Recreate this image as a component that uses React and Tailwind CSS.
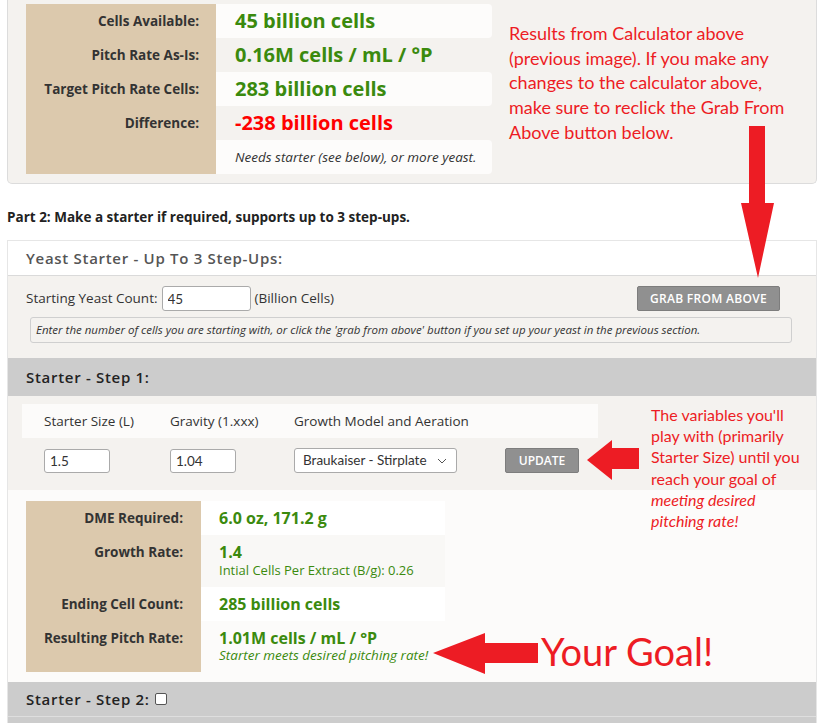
import React from 'react';

const green = 'text-[#3b8a0e]';

const TopRow = ({ label, value, white, valueClass }) => (
  <div className="flex h-[34px]">
    <div className="w-[190px] bg-[#dcc9ad] text-right pr-[17px] pt-[7px] text-[13.5px] font-bold text-[#333]">{label}</div>
    <div className={`w-[276px] pl-[19px] flex items-center rounded-r-[4px] ${white ? 'bg-[#fdfcfb]' : ''}`}>
      {value && <span className={`text-[20px] font-bold ${valueClass || green}`}>{value}</span>}
    </div>
  </div>
);

const ResultRow = ({ label, children, white, tall }) => (
  <div className={`flex ${tall ? 'h-[52px]' : 'h-[34px]'}`}>
    <div className="w-[175px] bg-[#dcc9ad] text-right pr-[18px] pt-[7px] text-[13.5px] font-bold text-[#333]">{label}</div>
    <div className={`w-[244px] pl-[18px] pt-[7px] ${white ? 'bg-white' : 'bg-[#f9f8f6]'}`}>{children}</div>
  </div>
);

const Arrow = ({ points }) => (
  <svg className="absolute left-0 top-0" width="823" height="723" viewBox="0 0 823 723">
    <polygon points={points} fill="#ed1c24" />
  </svg>
);

export default function App() {
  return (
    <div className="relative w-[823px] h-[723px] overflow-hidden bg-white font-['Open_Sans',sans-serif] text-[#333]">
      {/* Part 1 results */}
      <div className="ml-[7px] w-[810px] h-[184px] bg-[#f4f2ef] border border-t-0 border-[#dcdcdc] rounded-b-[5px] pt-[4px] pl-[18px] flex">
        <div>
          <TopRow label="Cells Available:" value="45 billion cells" white />
          <TopRow label="Pitch Rate As-Is:" value="0.16M cells / mL / °P" />
          <TopRow label="Target Pitch Rate Cells:" value="283 billion cells" white />
          <TopRow label="Difference:" value="-238 billion cells" valueClass="text-[#ff0000]" />
          <div className="flex h-[34px]">
            <div className="w-[190px] bg-[#dcc9ad]"></div>
            <div className="w-[276px] pl-[19px] flex items-center rounded-r-[4px] bg-[#fdfcfb] text-[13.5px] italic text-[#333]">
              Needs starter (see below), or more yeast.
            </div>
          </div>
        </div>
        <p className="ml-[17px] mt-[17px] whitespace-nowrap text-[#ed1c24] text-[18px] leading-[24.7px] font-['Lato',sans-serif]">
          Results from Calculator above<br />
          (previous image). If you make any<br />
          changes to the calculator above,<br />
          make sure to reclick the Grab From<br />
          Above button below.
        </p>
      </div>

      <h2 className="ml-[7px] mt-[24px] text-[13.5px] font-bold text-[#222] leading-[18px]">
        Part 2: Make a starter if required, supports up to 3 step-ups.
      </h2>

      {/* Part 2 panel */}
      <div className="ml-[7px] mt-[14px] w-[810px] border-l border-r border-t border-[#e6e6e6]">
        <div className="h-[35px] bg-white flex items-center pl-[18px] border-b border-[#dadada]">
          <span className="text-[15px] font-semibold tracking-[0.7px] text-[#555]">Yeast Starter - Up To 3 Step-Ups:</span>
        </div>

        <div className="bg-[#f4f2ef] h-[82px] pt-[10px] pl-[18px]">
          <div className="flex items-center h-[25px] pr-[36px]">
            <span className="text-[13.5px]">Starting Yeast Count:</span>
            <input
              readOnly
              value="45"
              className="ml-[4px] w-[89px] h-[25px] bg-white border border-[#aaa] rounded-[3px] px-[5px] text-[13.5px] font-['Lato',sans-serif] outline-none"
            />
            <span className="ml-[4px] text-[13.5px]">(Billion Cells)</span>
            <button className="ml-auto w-[143px] h-[25px] bg-[#909090] border border-[#7d7d7d] rounded-[2px] text-white text-[12px] font-semibold tracking-[0.3px]">
              GRAB FROM ABOVE
            </button>
          </div>
          <div className="mt-[6px] ml-[4px] w-[762px] h-[26px] border border-[#cfcfcf] rounded-[3px] flex items-center pl-[5px] text-[11.5px] italic text-[#333] whitespace-nowrap">
            Enter the number of cells you are starting with, or click the 'grab from above' button if you set up your yeast in the previous section.
          </div>
        </div>

        <div className="h-[38px] bg-[#cccccc] flex items-center pl-[18px]">
          <span className="text-[15px] font-semibold tracking-[0.7px] text-[#222]">Starter - Step 1:</span>
        </div>

        <div className="bg-[#f4f2ef] h-[94px] pt-[8px] pl-[14px]">
          <div className="w-[576px] h-[34px] bg-[#fcfbfa] flex items-center text-[13.5px] text-[#333]">
            <span className="ml-[22px] w-[126px]">Starter Size (L)</span>
            <span className="w-[124px]">Gravity (1.xxx)</span>
            <span>Growth Model and Aeration</span>
          </div>
          <div className="mt-[10px] flex items-center font-['Lato',sans-serif]">
            <input readOnly value="1.5" className="ml-[22px] w-[66px] h-[24px] bg-white border border-[#aaa] rounded-[3px] px-[5px] text-[13.5px] outline-none" />
            <input readOnly value="1.04" className="ml-[60px] w-[66px] h-[24px] bg-white border border-[#aaa] rounded-[3px] px-[5px] text-[13.5px] outline-none" />
            <div className="ml-[58px] w-[163px] h-[25px] bg-white border border-[#aaa] rounded-[3px] flex items-center pl-[8px] pr-[9px] text-[13.5px] whitespace-nowrap">
              <span>Braukaiser - Stirplate</span>
              <svg className="ml-auto" width="10" height="6" viewBox="0 0 10 6">
                <path d="M1 1l4 4 4-4" fill="none" stroke="#555" strokeWidth="1" />
              </svg>
            </div>
            <button className="ml-[48px] w-[74px] h-[25px] bg-[#909090] border border-[#7d7d7d] rounded-[2px] text-white text-[12px] font-semibold font-['Open_Sans',sans-serif]">
              UPDATE
            </button>
          </div>
        </div>

        <div className="bg-[#fcfbfa] h-[192px] pt-[11px] pl-[18px]">
          <ResultRow label="DME Required:" white>
            <div className={`text-[16px] font-bold leading-[20px] ${green}`}>6.0 oz, 171.2 g</div>
          </ResultRow>
          <ResultRow label="Growth Rate:" tall>
            <div className={`text-[16px] font-bold leading-[20px] ${green}`}>1.4</div>
            <div className={`text-[13px] leading-[17px] ${green}`}>Intial Cells Per Extract (B/g): 0.26</div>
          </ResultRow>
          <ResultRow label="Ending Cell Count:" white>
            <div className={`text-[16px] font-bold leading-[20px] ${green}`}>285 billion cells</div>
          </ResultRow>
          <div className="flex h-[51px]">
            <div className="w-[175px] bg-[#dcc9ad] text-right pr-[18px] pt-[7px] text-[13.5px] font-bold text-[#333]">Resulting Pitch Rate:</div>
            <div className="pl-[18px] pt-[7px]">
              <div className={`text-[16px] font-bold leading-[20px] ${green}`}>1.01M cells / mL / °P</div>
              <div className={`text-[13.5px] italic leading-[14px] ${green}`}>Starter meets desired pitching rate!</div>
            </div>
          </div>
        </div>

        <div className="h-[34px] bg-[#cccccc] flex items-center pl-[18px]">
          <span className="text-[15px] font-semibold tracking-[0.7px] text-[#222]">Starter - Step 2:</span>
          <span className="ml-[5px] w-[12px] h-[12px] bg-white border border-[#555] rounded-[2px]"></span>
        </div>
        <div className="h-[20px] bg-[#cccccc] border-t border-[#dedede]"></div>
      </div>

      {/* annotations */}
      <Arrow points="749,126 765,126 765,203 774,203 758,278 741,203 749,203" />
      <Arrow points="587,460 612,440 612,448 639,448 639,469 612,469 612,480" />
      <Arrow points="433,653 485,633 485,643 538,643 538,663 485,663 485,674" />

      <p className="absolute left-[651px] top-[404px] whitespace-nowrap text-[#ed1c24] text-[16px] leading-[21.2px] font-['Lato',sans-serif]">
        The variables you'll<br />
        play with (primarily<br />
        Starter Size) until you<br />
        reach your goal of<br />
        <i>meeting desired<br />pitching rate!</i>
      </p>
      <span className="absolute left-[541px] top-[628px] text-[#ed1c24] text-[38px] leading-[46px] font-['Lato',sans-serif]">Your Goal!</span>
    </div>
  );
}
